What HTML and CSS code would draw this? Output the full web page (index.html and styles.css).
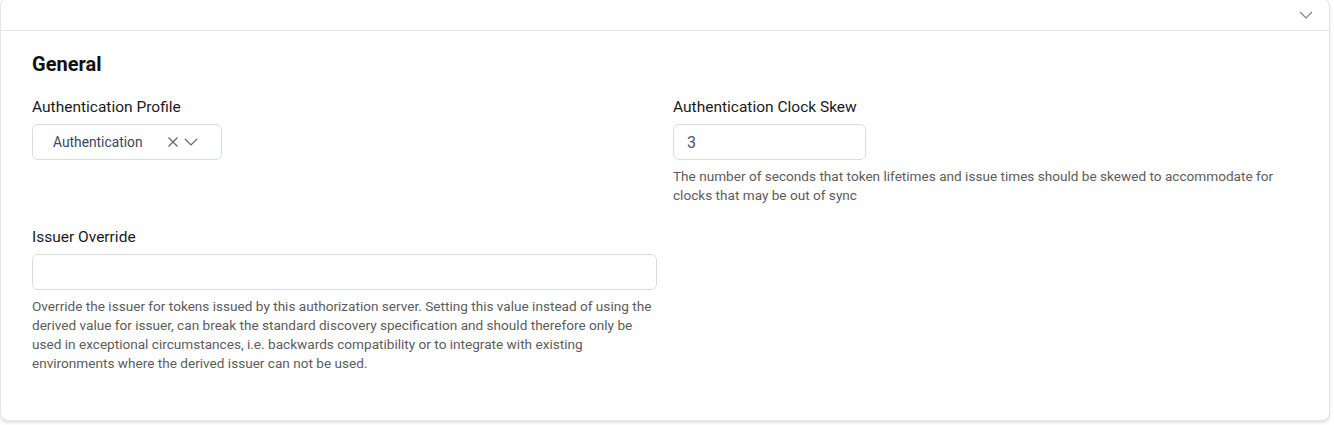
FILE: index.html
```html
<!DOCTYPE html>
<html lang="en">
<head>
<meta charset="utf-8">
<title>General</title>
<link rel="stylesheet" href="styles.css">
</head>
<body>
<div class="card">
  <div class="card-header">
    <svg class="header-chevron" width="14" height="8" viewBox="0 0 14 8"><path d="M1 1l6 6 6-6" fill="none" stroke="#7b8194" stroke-width="1.2"/></svg>
  </div>
  <div class="card-body">
    <h2 class="section-title">General</h2>
    <div class="grid">
      <div class="field">
        <label class="label">Authentication Profile</label>
        <div class="select">
          <span class="select-value">Authentication</span>
          <span class="select-icons">
            <svg width="12" height="12" viewBox="0 0 12 12"><path d="M1.5 1.5l9 9M10.5 1.5l-9 9" stroke="#5d6478" stroke-width="1.2" fill="none"/></svg>
            <svg width="14" height="8" viewBox="0 0 14 8"><path d="M1 1l6 6 6-6" fill="none" stroke="#5d6478" stroke-width="1.2"/></svg>
          </span>
        </div>
      </div>
      <div class="field">
        <label class="label">Authentication Clock Skew</label>
        <div class="input short">3</div>
        <p class="help">The number of seconds that token lifetimes and issue times should be skewed to accommodate for clocks that may be out of sync</p>
      </div>
      <div class="field">
        <label class="label">Issuer Override</label>
        <div class="input"></div>
        <p class="help">Override the issuer for tokens issued by this authorization server. Setting this value instead of using the derived value for issuer, can break the standard discovery specification and should therefore only be used in exceptional circumstances, i.e. backwards compatibility or to integrate with existing environments where the derived issuer can not be used.</p>
      </div>
    </div>
  </div>
</div>
</body>
</html>
```
FILE: styles.css
```css
html, body {
  margin: 0;
  padding: 0;
  background: #ffffff;
}
body {
  font-family: Roboto, "Liberation Sans", sans-serif;
  color: #111111;
  width: 1334px;
  height: 425px;
  overflow: hidden;
}
.card {
  width: 1330px;
  margin-top: -2px;
  border: 1px solid #e4e6ea;
  border-radius: 8px;
  box-shadow: 0 2px 3px rgba(0, 0, 0, 0.12);
  background: #fff;
  box-sizing: border-box;
  height: 423px;
}
.card-header {
  height: 32px;
  border-bottom: 1px solid #e4e6ea;
  display: flex;
  align-items: center;
  justify-content: flex-end;
  padding-right: 16px;
  box-sizing: border-box;
}
.header-chevron {
  margin-top: 1px;
}
.card-body {
  padding: 21px 31px 0 31px;
}
.section-title {
  margin: 0 0 21px 0;
  font-size: 20px;
  font-weight: 700;
  line-height: 24px;
  color: #111;
}
.grid {
  display: grid;
  grid-template-columns: 625px 625px;
  column-gap: 16px;
  row-gap: 22px;
}
.field {
  display: flex;
  flex-direction: column;
  align-items: flex-start;
}
.label {
  font-size: 15.5px;
  line-height: 20px;
  margin-bottom: 7px;
  color: #1a1a1a;
}
.select {
  width: 190px;
  height: 36px;
  box-sizing: border-box;
  border: 1px solid #d6dce6;
  border-radius: 6px;
  display: flex;
  align-items: center;
  justify-content: space-between;
  padding: 0 23px 0 20px;
}
.select-value {
  font-size: 13.8px;
  color: #3d4463;
}
.select-icons {
  display: flex;
  align-items: center;
  gap: 5px;
}
.input {
  width: 100%;
  height: 36px;
  box-sizing: border-box;
  border: 1px solid #d6dce6;
  border-radius: 6px;
  padding: 0 13px;
  display: flex;
  align-items: center;
  font-size: 16px;
  color: #4b5575;
}
.input.short {
  width: 193px;
}
.help {
  margin: 7px 0 0 0;
  font-size: 13.6px;
  line-height: 19px;
  color: #5c5c5c;
}
```
